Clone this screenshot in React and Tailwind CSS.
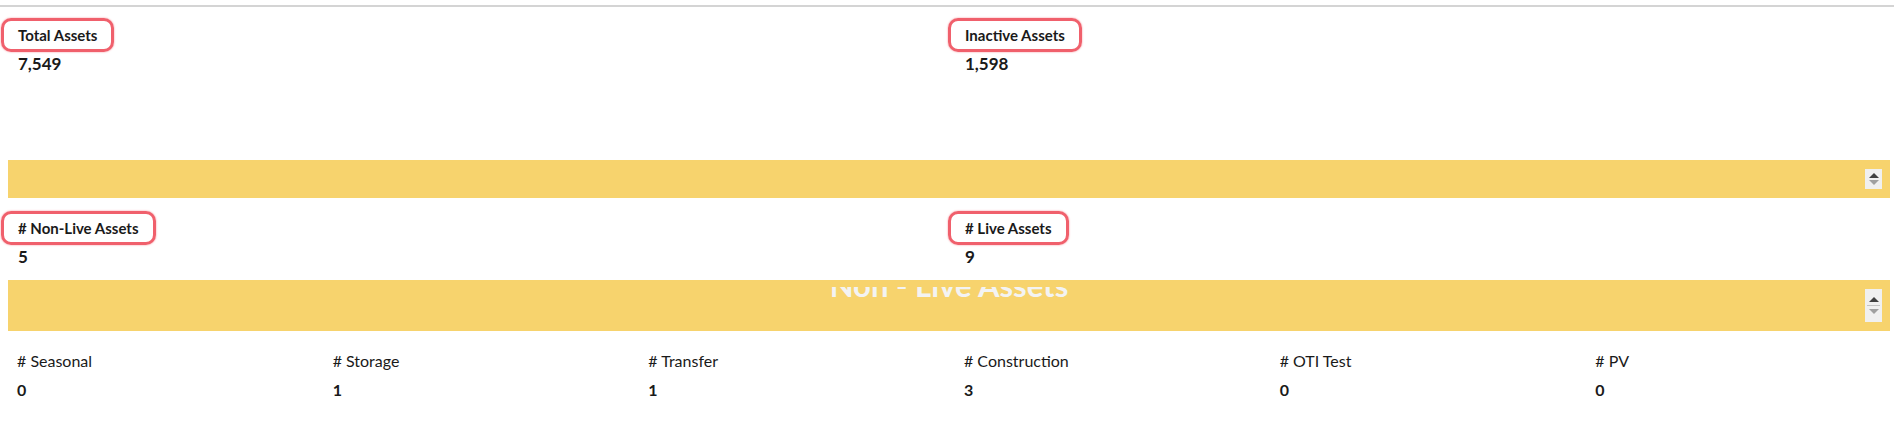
import { useState } from "react";

const font = { fontFamily: "Lato, 'Open Sans', sans-serif" };

function Marked({ children }) {
    return (
        <span className="inline-block rounded-[10px] border-[3px] border-[#f0606c] px-[14px] py-[5px] text-[15px] font-bold leading-[18px] text-[#1a1a1a] shadow-[0_0_2px_#f58b95]">
            {children}
        </span>
    );
}

function Stat({ label, value }) {
    return (
        <div className="pl-[1px]">
            <Marked>{label}</Marked>
            <div className="mt-[2px] pl-[17px] text-[17px] font-bold leading-[20px] text-[#1a1a1a]">{value}</div>
        </div>
    );
}

function Spinner({ tall = false }) {
    return (
        <div
            className={
                "relative flex w-[17px] flex-col items-center justify-center bg-[#f0f0f0] " +
                (tall ? "h-[33px] gap-[3px]" : "h-[20px] gap-[2px]")
            }
        >
            <span className="h-0 w-0 border-x-[5px] border-b-[5px] border-x-transparent border-b-[#404040]" />
            {tall ? <span className="h-[1px] w-[13px] bg-[#c4c4c4]" /> : null}
            <span className="h-0 w-0 border-x-[5px] border-t-[5px] border-x-transparent border-t-[#a0a0a0]" />
        </div>
    );
}

export default function App() {
    const [counts] = useState([
        { label: "# Seasonal", value: 0 },
        { label: "# Storage", value: 1 },
        { label: "# Transfer", value: 1 },
        { label: "# Construction", value: 3 },
        { label: "# OTI Test", value: 0 },
        { label: "# PV", value: 0 },
    ]);

    return (
        <div className="h-[421px] w-full overflow-hidden bg-white" style={font}>
            <div className="h-[5px]" />
            <div className="border-t-2 border-[#d4d4d4]" />

            <div className="grid h-[153px] grid-cols-2 pt-[11px]">
                <Stat label="Total Assets" value="7,549" />
                <Stat label="Inactive Assets" value="1,598" />
            </div>

            <div className="ml-2 mr-1 flex h-[38px] items-center justify-end bg-[#f7d36d] pr-[8px]">
                <Spinner />
            </div>

            <div className="grid h-[82px] grid-cols-2 pt-[13px]">
                <Stat label="# Non-Live Assets" value="5" />
                <Stat label="# Live Assets" value="9" />
            </div>

            {/* title is scrolled up inside the panel, only its lower part shows */}
            <div className="relative ml-2 mr-1 flex h-[51px] items-center justify-end bg-[#f7d36d] pr-[8px]">
                <div className="absolute inset-x-0 top-[7px] bottom-0 overflow-hidden">
                    <div className="absolute inset-x-0 top-[-21px] text-center text-[31px] font-bold leading-[38px] text-[#f3f3f3]">
                        Non - Live Assets
                    </div>
                </div>
                <Spinner tall />
            </div>

            <div className="grid grid-cols-6 pt-[21px]">
                {counts.map((c) => (
                    <div key={c.label} className="pl-[17px]">
                        <div className="text-[16px] leading-[18px] text-[#1a1a1a]">{c.label}</div>
                        <div className="mt-[10px] text-[16px] font-bold leading-[20px] text-[#1a1a1a]">{c.value}</div>
                    </div>
                ))}
            </div>
        </div>
    );
}
